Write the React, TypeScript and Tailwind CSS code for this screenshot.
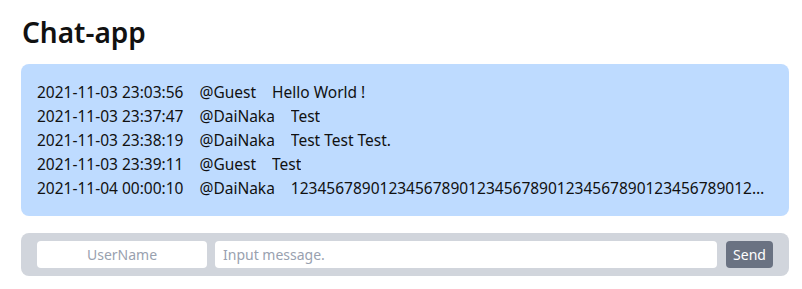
// Chat-app - message list and input bar

import { useState } from 'react'

type Message = {
  date: string
  user: string
  text: string
}

const messages: Message[] = [
  { date: '2021-11-03 23:03:56', user: '@Guest', text: 'Hello World !' },
  { date: '2021-11-03 23:37:47', user: '@DaiNaka', text: 'Test' },
  { date: '2021-11-03 23:38:19', user: '@DaiNaka', text: 'Test Test Test.' },
  { date: '2021-11-03 23:39:11', user: '@Guest', text: 'Test' },
  {
    date: '2021-11-04 00:00:10',
    user: '@DaiNaka',
    text: '1234567890123456789012345678901234567890123456789012345678901234567890',
  },
]

export default function App() {
  const [name, setName] = useState('')
  const [message, setMessage] = useState('')

  return (
    <div className="pl-[21px] pr-[13px] pt-[13px] font-['Noto_Sans',sans-serif] text-[#111]">
      {/* Header */}
      <h1 className="text-[28px] font-semibold leading-[38px] mb-[13px] pl-px">Chat-app</h1>

      {/* Messages */}
      <div className="bg-blue-200 rounded-lg px-4 py-4 text-[15.5px] leading-6">
        {messages.map((m, i) => (
          <div key={i} className="flex gap-4 whitespace-nowrap">
            <span>{m.date}</span>
            <span>{m.user}</span>
            <span className="truncate">{m.text}</span>
          </div>
        ))}
      </div>

      {/* Input bar */}
      <div className="mt-[17px] bg-gray-300 rounded-lg px-4 py-2 flex gap-2 items-center">
        <input
          className="w-[170px] h-[27px] bg-white rounded text-sm text-center placeholder:text-gray-400 outline-none"
          placeholder="UserName"
          value={name}
          onChange={(e) => setName(e.target.value)}
        />
        <input
          className="flex-1 h-[27px] bg-white rounded text-sm px-2 placeholder:text-gray-400 outline-none"
          placeholder="Input message."
          value={message}
          onChange={(e) => setMessage(e.target.value)}
        />
        <button className="ml-px w-[47px] h-[27px] bg-gray-500 text-white text-sm rounded">
          Send
        </button>
      </div>
    </div>
  )
}
